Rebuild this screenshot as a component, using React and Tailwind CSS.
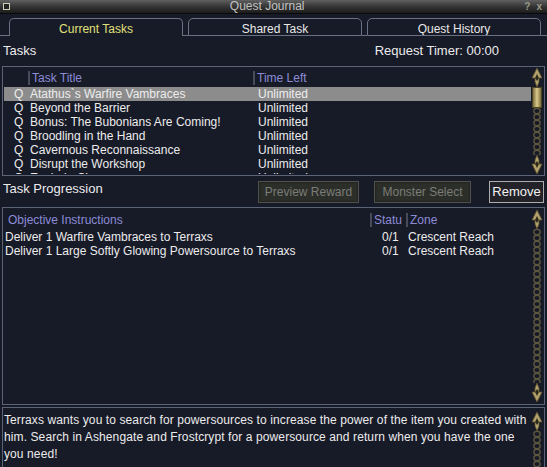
import React from 'react';

const tasks = [
  'Atathus`s Warfire Vambraces',
  'Beyond the Barrier',
  'Bonus: The Bubonians Are Coming!',
  'Broodling in the Hand',
  'Cavernous Reconnaissance',
  'Disrupt the Workshop',
  'Explode Chaos',
];

const objectives = [
  ['Deliver 1 Warfire Vambraces to Terraxs', '0/1', 'Crescent Reach'],
  ['Deliver 1 Large Softly Glowing Powersource to Terraxs', '0/1', 'Crescent Reach'],
];

function Arrow({ down }) {
  return (
    <svg width="12" height="19" viewBox="0 0 12 19" className={`shrink-0 ${down ? 'rotate-180' : ''}`}>
      <path d="M6 0 L11 10 L8 10 L8 14 L6 19 L4 14 L4 10 L1 10 Z" fill="#b3a26c" stroke="#5e5230" strokeWidth="0.8" />
      <path d="M6 6 L8 10 L6 13 L4 10 Z" fill="#2e2a1c" />
    </svg>
  );
}

function Chain() {
  return (
    <div className="flex-1 min-h-0 w-[12px] overflow-hidden">
      <svg width="12" height="400">
        <defs>
          <pattern id="chain" width="12" height="6" patternUnits="userSpaceOnUse">
            <ellipse cx="6" cy="3" rx="3.2" ry="2.7" fill="none" stroke="#5f583e" strokeWidth="1.3" />
          </pattern>
        </defs>
        <rect width="12" height="400" fill="url(#chain)" />
      </svg>
    </div>
  );
}

function ScrollBar({ thumb, className = 'h-full' }) {
  return (
    <div className={`flex flex-col items-center w-[12px] shrink-0 ${className}`}>
      <Arrow />
      {thumb && (
        <div className="w-[10px] h-[21px] shrink-0 bg-gradient-to-r from-[#7d6e3c] via-[#dccc8e] to-[#7d6e3c] border border-[#4e4322]" />
      )}
      <Chain />
      <Arrow down />
    </div>
  );
}

function Tab({ label, active }) {
  return (
    <div
      className={`w-[174px] h-[18px] rounded-t-[5px] border-t border-x border-[#6a7286] flex justify-center overflow-hidden ${
        active ? 'text-[#e0e07a] items-start pt-[3px]' : 'text-[#e8e8e8] items-end border-b leading-[11px]'
      }`}
    >
      {label}
    </div>
  );
}

function Sep() {
  return <span className="w-[2px] h-[14px] bg-[#474b5a] mr-[2px] shrink-0" />;
}

export default function App() {
  return (
    <div
      className="w-[547px] h-[467px] overflow-hidden flex flex-col bg-[#171a27] text-[#ececec] text-[12px] leading-[14px]"
      style={{ fontFamily: '"Liberation Sans", Arial, sans-serif' }}
    >
      {/* title bar */}
      <div className="h-[14px] shrink-0 flex items-center bg-gradient-to-b from-[#606060] via-[#363636] to-[#1c1c1c] border-b border-[#0a0a0a] px-[3px]">
        <div className="w-[7px] h-[7px] border border-[#cfcfb8] bg-[#242424]" />
        <div className="flex-1 text-center text-[#c2c2c2] leading-[13px]">Quest Journal</div>
        <div className="text-[#9c9a86] text-[10px] font-bold flex gap-[6px] pr-[2px] leading-[12px]">
          <span>?</span>
          <span>x</span>
        </div>
      </div>

      {/* tabs */}
      <div className="flex items-end mt-[3px] h-[19px] shrink-0">
        <div className="w-[9px] self-stretch border-b border-[#6a7286]" />
        <Tab label="Current Tasks" active />
        <div className="w-[5px] self-stretch border-b border-[#6a7286]" />
        <Tab label="Shared Task" />
        <div className="w-[5px] self-stretch border-b border-[#6a7286]" />
        <Tab label="Quest History" />
        <div className="flex-1 self-stretch border-b border-[#6a7286]" />
      </div>

      <div className="flex shrink-0 h-[30px] items-center pb-[1px] px-[3px] text-[13px]">
        <span className="flex-1">Tasks</span>
        <span className="mr-[45px]">Request Timer: 00:00</span>
      </div>

      {/* task list */}
      <div className="mx-[2px] h-[110px] shrink-0 border border-[#5c6478] flex pl-[1px] pr-[1px] py-[1px] overflow-hidden">
        <div className="flex-1 flex flex-col overflow-hidden">
          <div className="flex h-[19px] shrink-0 items-center">
            <div className="w-[24px]" />
            <Sep />
            <span className="w-[221px] text-[#8c8cd6]">Task Title</span>
            <Sep />
            <span className="text-[#8c8cd6]">Time Left</span>
          </div>
          {tasks.map((t, i) => (
            <div key={t} className={`flex h-[14px] shrink-0 items-center ${i === 0 ? 'bg-[#8c8c8c]' : ''}`}>
              <span className="w-[26px] pl-[10px]">Q</span>
              <span className="w-[228px]">{t}</span>
              <span>Unlimited</span>
            </div>
          ))}
        </div>
        <ScrollBar thumb />
      </div>

      {/* progression */}
      <div className="flex items-center h-[31px] shrink-0 px-[3px]">
        <span className="flex-1 text-[13px] pb-[6px]">Task Progression</span>
        <button className="w-[101px] h-[22px] mr-[15px] bg-[#2c2e2a] border border-[#50534c] text-[#7b7d78] shadow-[inset_0_0_2px_#111]">
          Preview Reward
        </button>
        <button className="w-[97px] h-[22px] mr-[18px] bg-[#2c2e2a] border border-[#50534c] text-[#7b7d78] shadow-[inset_0_0_2px_#111]">
          Monster Select
        </button>
        <button className="w-[55px] h-[22px] bg-[#242229] border border-[#acacac] text-[#f2f2f2] text-[13px]">Remove</button>
      </div>

      <div className="mx-[2px] h-[198px] shrink-0 border border-[#5c6478] flex pl-[1px] pr-[1px] pt-[2px] pb-[2px]">
        <div className="flex-1 flex flex-col">
          <div className="flex h-[20px] items-center">
            <span className="w-[366px] pl-[4px] text-[#8c8cd6]">Objective Instructions</span>
            <Sep />
            <span className="w-[32px] text-[#8c8cd6]">Statu</span>
            <Sep />
            <span className="text-[#8c8cd6]">Zone</span>
          </div>
          {objectives.map(([o, s, z]) => (
            <div key={o} className="flex h-[14px] items-center">
              <span className="w-[378px] pl-[1px]">{o}</span>
              <span className="w-[26px]">{s}</span>
              <span>{z}</span>
            </div>
          ))}
        </div>
        <ScrollBar />
      </div>

      <div className="mx-[2px] mt-[2px] flex-1 border-t border-x border-[#5c6478] flex items-start pl-[1px] pr-[1px] pt-[4px] overflow-hidden">
        <p className="flex-1 leading-[17px] tracking-[0.1px]">
          Terraxs wants you to search for powersources to increase the power of the item you created with him. Search in
          Ashengate and Frostcrypt for a powersource and return when you have the one
          <br />
          you need!
        </p>
        <ScrollBar className="h-[90px]" />
      </div>
    </div>
  );
}
